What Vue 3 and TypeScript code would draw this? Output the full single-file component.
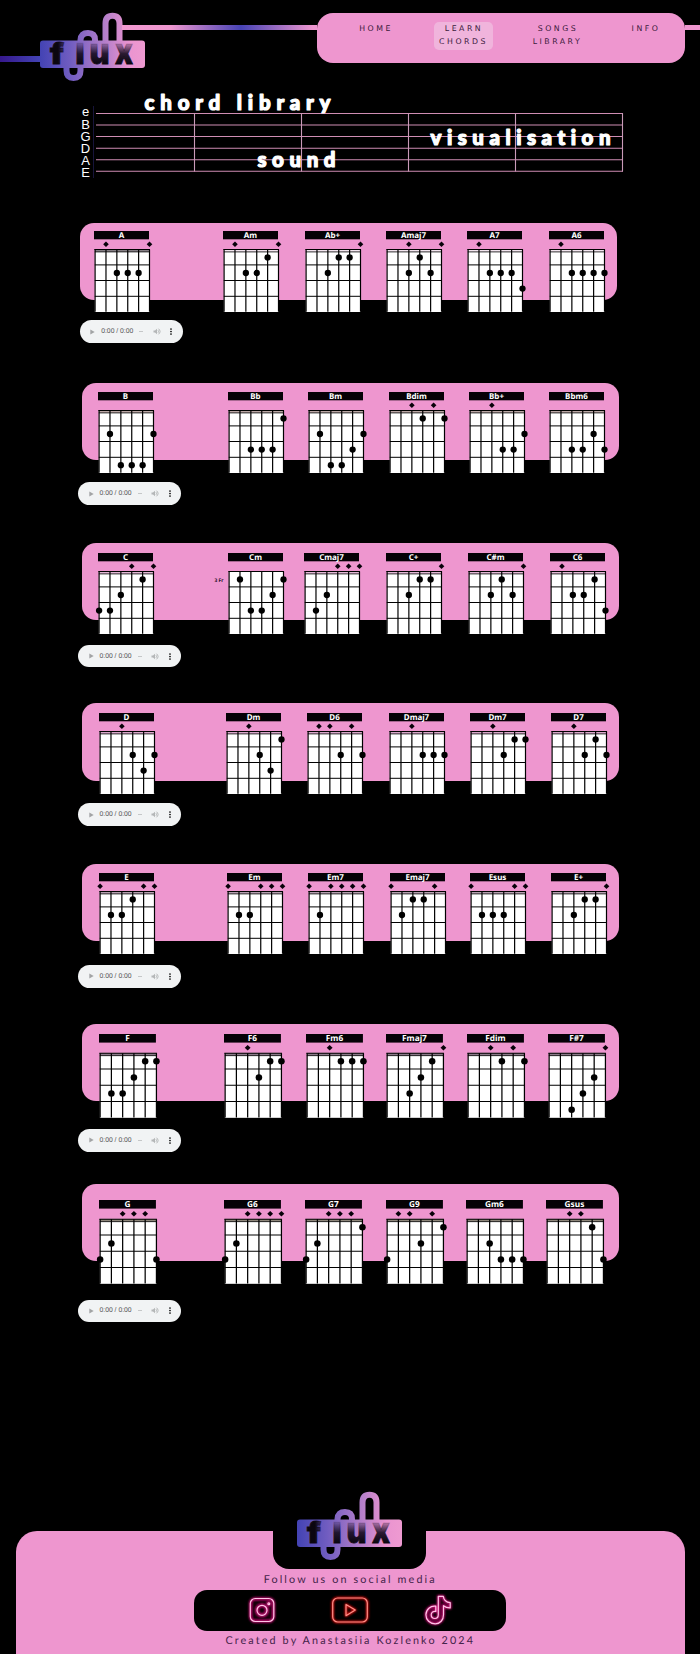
<script setup lang="ts">
interface Chord {
  name: string
  open: number[]
  dots: [number, number][]
  fret?: string
}

interface Family {
  id: string
  scale: number
  left: number
  top: number
  xs: number[]
  nut: string
  audioLeft: number
  audioGap: number
  chords: Chord[]
}

const c = (name: string, open: number[], dots: [number, number][], fret?: string): Chord => ({ name, open, dots, fret })

const families: Family[] = [
  {
    id: 'A', scale: 1, left: 80.2, top: 8.2, xs: [94, 223.3, 305, 386, 467.3, 548.7], nut: '#f4e6f0', audioLeft: 79.7, audioGap: 20.3,
    chords: [
      c('A', [1, 5], [[2, 2], [3, 2], [4, 2]]),
      c('Am', [1, 5], [[4, 1], [2, 2], [3, 2]]),
      c('Ab+', [5], [[3, 1], [4, 1], [2, 2]]),
      c('Amaj7', [2, 5], [[3, 1], [2, 2], [4, 2]]),
      c('A7', [1], [[2, 2], [3, 2], [4, 2], [5, 3]]),
      c('A6', [1], [[2, 2], [3, 2], [4, 2], [5, 2]]),
    ],
  },
  {
    id: 'B', scale: 1, left: 82.4, top: 9.1, xs: [98.3, 228, 308.3, 389, 469, 549.3], nut: '#b9a6a4', audioLeft: 78, audioGap: 22,
    chords: [
      c('B', [], [[1, 2], [5, 2], [2, 4], [3, 4], [4, 4]]),
      c('Bb', [], [[5, 1], [2, 3], [3, 3], [4, 3]]),
      c('Bm', [], [[1, 2], [5, 2], [4, 3], [2, 4], [3, 4]]),
      c('Bdim', [2, 4], [[3, 1], [5, 1]]),
      c('Bb+', [2], [[5, 2], [3, 3], [4, 3]]),
      c('Bbm6', [], [[4, 2], [2, 3], [3, 3], [5, 3]]),
    ],
  },
  {
    id: 'C', scale: 1, left: 82.4, top: 9.7, xs: [97.9, 228.2, 303.9, 386.4, 468.2, 550.4], nut: '#e3b9d6', audioLeft: 78, audioGap: 24.2,
    chords: [
      c('C', [3, 5], [[4, 1], [2, 2], [0, 3], [1, 3]]),
      c('Cm', [], [[1, 1], [5, 1], [4, 2], [2, 3], [3, 3]], '3 Fr'),
      c('Cmaj7', [3, 4, 5], [[2, 2], [1, 3]]),
      c('C+', [5], [[3, 1], [4, 1], [2, 2]]),
      c('C#m', [5], [[3, 1], [2, 2], [4, 2]]),
      c('C6', [1], [[4, 1], [2, 2], [3, 2], [5, 3]]),
    ],
  },
  {
    id: 'D', scale: 1, left: 82.4, top: 9.6, xs: [99.3, 226.4, 307.5, 388.6, 470, 551], nut: '#d9a8cb', audioLeft: 78, audioGap: 22.7,
    chords: [
      c('D', [2], [[3, 2], [5, 2], [4, 3]]),
      c('Dm', [2], [[5, 1], [3, 2], [4, 3]]),
      c('D6', [1, 2, 4], [[3, 2], [5, 2]]),
      c('Dmaj7', [2], [[3, 2], [4, 2], [5, 2]]),
      c('Dm7', [2], [[4, 1], [5, 1], [3, 2]]),
      c('D7', [2], [[4, 1], [3, 2], [5, 2]]),
    ],
  },
  {
    id: 'E', scale: 1, left: 82.4, top: 9.5, xs: [99.3, 227.5, 308.2, 390.4, 470, 551], nut: '#b5a0b0', audioLeft: 78, audioGap: 24,
    chords: [
      c('E', [0, 4, 5], [[3, 1], [1, 2], [2, 2]]),
      c('Em', [0, 3, 4, 5], [[1, 2], [2, 2]]),
      c('Em7', [0, 2, 3, 4, 5], [[1, 2]]),
      c('Emaj7', [0, 4], [[2, 1], [3, 1], [1, 2]]),
      c('Esus', [0, 4, 5], [[1, 2], [2, 2], [3, 2]]),
      c('E+', [5], [[3, 1], [4, 1], [2, 2]]),
    ],
  },
  {
    id: 'F', scale: 1.035, left: 82.4, top: 10.2, xs: [98.6, 224.3, 305.7, 386.4, 467.1, 548.2], nut: '#8a7a88', audioLeft: 78, audioGap: 28,
    chords: [
      c('F', [], [[4, 1], [5, 1], [3, 2], [1, 3], [2, 3]]),
      c('F6', [2], [[4, 1], [5, 1], [3, 2]]),
      c('Fm6', [2], [[3, 1], [4, 1], [5, 1]]),
      c('Fmaj7', [5], [[4, 1], [3, 2], [2, 3]]),
      c('Fdim', [2, 4], [[3, 1], [5, 1]]),
      c('F#7', [5], [[4, 2], [3, 3], [2, 4]]),
    ],
  },
  {
    id: 'G', scale: 1.035, left: 82.4, top: 15.7, xs: [98.9, 224.3, 304.6, 385.7, 465.7, 546.4], nut: '#8d8579', audioLeft: 78, audioGap: 38.5,
    chords: [
      c('G', [2, 3, 4], [[1, 2], [0, 3], [5, 3]]),
      c('G6', [2, 3, 4, 5], [[1, 2], [0, 3]]),
      c('G7', [2, 3, 4], [[5, 1], [1, 2], [0, 3]]),
      c('G9', [1, 2, 4], [[5, 1], [3, 2], [0, 3]]),
      c('Gm6', [], [[2, 2], [3, 3], [4, 3], [5, 3]]),
      c('Gsus', [2, 3], [[4, 1], [5, 3]]),
    ],
  },
]

const stringX = (n: number): number => 1.1 + n * 10.88
const fretY = (n: number): number => 10.8 + n * 15.6

const panelStyle = (f: Family) => ({
  marginLeft: `${f.left}px`,
  padding: `${f.top}px 0 0 ${f.xs[0] - f.left}px`,
  gridTemplateColumns: f.xs.map((x, i) => (i < 5 ? `${(f.xs[i + 1] - x).toFixed(1)}px` : 'auto')).join(' '),
})

const board = [113.5, 125, 136.5, 148.2, 159.7, 171.3]
const bars = [194.5, 301.5, 408.5, 515.5, 622.5]
const tuning = [
  { n: 'e', y: 115.5 }, { n: 'B', y: 129 }, { n: 'G', y: 141 },
  { n: 'D', y: 153 }, { n: 'A', y: 165 }, { n: 'E', y: 177 },
]
const words = [
  { t: 'chord library', x: 144.5, y: 110.3, w: 186 },
  { t: 'visualisation', x: 430.5, y: 145.3, w: 180 },
  { t: 'sound', x: 257.5, y: 167, w: 78 },
]
</script>

<template>
  <div class="page">
    <svg class="defs" width="0" height="0" aria-hidden="true">
      <defs>
        <linearGradient id="brand" gradientUnits="userSpaceOnUse" x1="0" y1="0" x2="105" y2="0">
          <stop offset="0" stop-color="#4343b4" />
          <stop offset=".28" stop-color="#6f5cc0" />
          <stop offset=".62" stop-color="#b57fca" />
          <stop offset=".85" stop-color="#ea94d0" />
          <stop offset="1" stop-color="#ee9ad1" />
        </linearGradient>
        <linearGradient id="ink" gradientUnits="userSpaceOnUse" x1="0" y1="29" x2="0" y2="52">
          <stop offset="0" stop-color="#120a1c" stop-opacity="0" />
          <stop offset=".55" stop-color="#120a1c" stop-opacity=".88" />
          <stop offset="1" stop-color="#0b0610" />
        </linearGradient>
        <linearGradient id="inkSide" gradientUnits="userSpaceOnUse" x1="11" y1="0" x2="25" y2="0">
          <stop offset="0" stop-color="#0b0610" />
          <stop offset=".5" stop-color="#0b0610" />
          <stop offset="1" stop-color="#120a1c" stop-opacity=".45" />
        </linearGradient>
        <symbol id="logo" viewBox="0 0 106 70">
          <rect x="0" y="28.500" width="105" height="27.500" rx="3" fill="url(#brand)" />
          <path d="M26.500 36V58.500Q26.500 66 33.500 66T40.500 58.500V28Q41 21 48 21T55 28V36M65.500 34V11.500Q65.500 3.700 72.500 3.700T79.500 11.500V36" fill="none" stroke="url(#brand)" stroke-width="6" />
          <g class="letters">
            <text class="tall side" x="10" y="52" textLength="14" lengthAdjust="spacingAndGlyphs">f</text>
            <text class="tall" x="35.500" y="52" textLength="9" lengthAdjust="spacingAndGlyphs">l</text>
            <text class="wide" x="49.500" y="52" textLength="20" lengthAdjust="spacingAndGlyphs">u</text>
            <text class="wide" x="75" y="52" textLength="18" lengthAdjust="spacingAndGlyphs">x</text>
          </g>
        </symbol>
        <filter id="glow" x="-30%" y="-30%" width="160%" height="160%"><feGaussianBlur stdDeviation="1.1" /></filter>
      </defs>
    </svg>

    <header class="head">
      <i class="wire wire-in"></i>
      <svg class="logo" width="106" height="70"><use href="#logo" /></svg>
      <i class="wire wire-mid"></i>
      <nav class="nav">
        <a class="home">HOME</a>
        <a class="active">LEARN<br>CHORDS</a>
        <a class="songs">SONGS<br>LIBRARY</a>
        <a class="info">INFO</a>
      </nav>
      <i class="wire wire-out"></i>
    </header>

    <svg class="board" width="700" height="143" viewBox="0 80 700 143">
      <path d="M93.500 106V178" stroke="#17143a" />
      <path v-for="y in board" :key="y" :d="`M96 ${y}H623`" stroke="#cf8db3" stroke-width="1.1" />
      <path v-for="x in bars" :key="x" :d="`M${x} 113V171.500`" stroke="#c99ab8" stroke-width="1.1" />
      <text v-for="s in tuning" :key="s.n + s.y" class="tuning" x="85.500" :y="s.y">{{ s.n }}</text>
      <text v-for="w in words" :key="w.t" class="word" :x="w.x" :y="w.y" :textLength="w.w">{{ w.t }}</text>
    </svg>

    <main>
      <section v-for="f in families" :key="f.id" class="family">
        <div class="panel" :style="panelStyle(f)">
          <svg
            v-for="ch in f.chords" :key="ch.name" class="chord"
            :width="57 * f.scale" :height="83 * f.scale" viewBox="0 0 57 83"
          >
            <rect width="55" height="8.300" fill="#050106" />
            <text class="name" x="27.500" y="7">{{ ch.name }}</text>
            <text v-if="ch.fret" class="pos" x="-4.500" y="29.300">{{ ch.fret }}</text>
            <rect x=".8" y="18.300" width="54.800" height="62.700" fill="#fff" />
            <rect v-if="!ch.fret" x="1" y="18.300" width="54.500" height="2.600" :fill="f.id === 'A' && ch.name === 'A' ? '#857e84' : f.nut" />
            <path d="M.3 18.500H56" stroke="#000" stroke-width="1" />
            <path v-if="!ch.fret" d="M.8 20.900H55.700" stroke="#000" stroke-width=".8" />
            <path d="M.8 33.900H55.700M.8 49.500H55.700M.8 65.300H55.700" stroke="#000" stroke-width="1" />
            <path v-for="n in 6" :key="n" :d="`M${stringX(n - 1)} 18.500V80.700`" stroke="#000" stroke-width="1.200" />
            <path
              v-for="o in ch.open" :key="'o' + o"
              :d="`M${stringX(o)} 10.600l2.800 2.700-2.800 2.700-2.800-2.700z`" fill="#08020a"
            />
            <circle v-for="(d, i) in ch.dots" :key="'d' + i" :cx="stringX(d[0])" :cy="fretY(d[1])" r="3.150" />
          </svg>
        </div>
        <div class="audio" :style="{ marginLeft: f.audioLeft + 'px', marginTop: f.audioGap + 'px' }">
          <svg class="play" width="5" height="6" viewBox="0 0 5 6"><path d="M.3.500 4.700 3 .3 5.500z" fill="#a2a4a5" /></svg>
          <span class="time">0:00 / 0:00</span>
          <i class="track"></i>
          <svg class="vol" width="8" height="7" viewBox="0 0 8 7">
            <path d="M.5 2.400H2L4 .7V6.300L2 4.600H.5z" fill="#b4b6b7" />
            <path d="M5 2.200Q6 3.500 5 4.800M5.500.7Q8.600 3.500 5.500 6.300" fill="none" stroke="#a7a9aa" stroke-width=".8" />
          </svg>
          <svg class="more" width="2" height="7" viewBox="0 0 2 7">
            <circle cx="1" cy="1" r=".85" /><circle cx="1" cy="3.500" r=".85" /><circle cx="1" cy="6" r=".85" />
          </svg>
        </div>
      </section>
    </main>

    <footer class="foot">
      <div class="notch"><svg class="logo" width="106" height="70"><use href="#logo" /></svg></div>
      <p class="follow">Follow us on social media</p>
      <div class="social">
        <svg width="40" height="36" viewBox="0 0 40 36">
          <g v-for="k in 2" :key="k" :class="['neon', k === 1 ? 'halo pink' : 'tube']">
            <rect x="8.300" y="6.500" width="23.500" height="23" rx="5" />
            <circle cx="20" cy="18.300" r="5" />
            <circle cx="26.800" cy="11.700" r=".9" />
          </g>
        </svg>
        <svg width="46" height="36" viewBox="0 0 46 36">
          <g v-for="k in 2" :key="k" :class="['neon', k === 1 ? 'halo red' : 'tube warm']">
            <rect x="5.700" y="6" width="34.600" height="24" rx="5" />
            <path d="M19 12.500V23.700L28.300 18.100z" />
          </g>
        </svg>
        <svg width="40" height="36" viewBox="0 0 40 36">
          <g v-for="k in 2" :key="k" :class="['neon', k === 1 ? 'halo pink' : 'tube']">
            <path d="M20.300 4.300H25.300C25.800 8 28.600 10.300 32.200 10.600V15.900C29.500 16 27.200 15.100 25.500 13.700V22.700C25.500 28 22.100 31.800 17.200 31.800C12 31.800 7.900 28 7.900 22.800C7.900 17.400 12.500 13.400 17.800 14.200V19.500C15.300 18.800 13.200 20.300 13.200 22.800C13.200 25 14.900 26.500 16.900 26.500C19.200 26.500 20.300 24.900 20.300 22.500Z" />
          </g>
        </svg>
      </div>
      <p class="credit">Created by Anastasiia Kozlenko 2024</p>
    </footer>
  </div>
</template>

<style>
body { margin: 0; background: #000; }
</style>

<style scoped>
.page { width: 700px; height: 1654px; overflow: hidden; background: #000; position: relative; display: flex; flex-direction: column; }
.defs { position: absolute; }
.head { display: flex; align-items: flex-start; height: 80px; padding-top: 12px; box-sizing: border-box; flex: none; }
.wire { display: block; height: 5.500px; flex: none; }
.wire-in { width: 40px; margin-top: 44px; background: linear-gradient(90deg, #36188c, #4343b4); }
.logo { display: block; flex: none; overflow: visible; }
.wire-mid { width: 195px; margin: 12.500px 0 0 -24px; background: linear-gradient(90deg, #f39ad2, #ee96cf 25%, #4743b5 61%, #ee96cf 98%); }
.wire-out { width: 15px; margin-top: 12.500px; background: #ee96cf; }
.letters text { font: 900 28px Inter, sans-serif; fill: url(#ink); stroke: url(#ink); stroke-width: .8px; }
.letters .side { fill: url(#inkSide); stroke: url(#inkSide); }
.letters .wide { font-size: 36px; }
.nav { width: 368px; height: 50.500px; margin-top: .7px; box-sizing: border-box; border-radius: 16px; background: #ee96cf; display: flex; align-items: flex-start; padding-top: 9px; flex: none; }
.nav a { font: 400 7.800px/13px "DejaVu Sans", sans-serif; letter-spacing: 2.500px; color: #3b1a3c; text-align: center; text-indent: 1px; width: 59px; height: 28px; flex: none; border-radius: 5px; padding-top: .7px; box-sizing: border-box; }
.nav .home { margin-left: 29px; }
.nav .active { margin-left: 29px; background: #f0b4dc; }
.nav .songs { margin-left: 35px; }
.nav .info { margin-left: 29px; }
.board { display: block; flex: none; }
.tuning { font: 13px "Liberation Sans", Arial, sans-serif; fill: #fff; text-anchor: middle; }
.word { font: 900 20.500px Lato, sans-serif; font-variant-ligatures: none; fill: #fff; stroke: #fff; stroke-width: 1.200px; stroke-linejoin: round; }
.family { height: 160.150px; }
.panel { width: 536.600px; height: 77.200px; box-sizing: border-box; border-radius: 14px; background: #ee96cf; display: grid; align-items: start; }
.chord { display: block; overflow: visible; }
.name { font: 700 8px "Noto Sans", sans-serif; fill: #fff; text-anchor: middle; text-rendering: geometricPrecision; }
.pos { font: 700 4.900px "Noto Sans", sans-serif; fill: #1c0a1c; text-anchor: end; text-rendering: geometricPrecision; }
.audio { width: 103.400px; height: 22.800px; border-radius: 12px; background: #f1f3f4; display: flex; align-items: center; box-sizing: border-box; padding-left: 10.500px; }
.time { font: 6.800px "Liberation Sans", sans-serif; color: #555; margin-left: 6px; width: 32px; white-space: nowrap; text-rendering: geometricPrecision; }
.track { width: 4px; height: 1px; background: #c5c7c8; margin-left: 6px; }
.vol { margin-left: 9.500px; }
.more { margin-left: 9.500px; }
.foot { position: absolute; left: 16px; top: 1531px; width: 668.500px; height: 123px; border-radius: 21px 21px 0 0; background: #ee96cf; display: flex; flex-direction: column; align-items: center; }
.notch { width: 153px; height: 37.500px; margin-left: -1px; background: #000; border-radius: 0 0 16px 16px; flex: none; }
.notch .logo { margin: -40px 0 0 23.500px; }
.foot p { margin: 0; font: 10.800px/14px Lato, sans-serif; letter-spacing: 2.120px; color: #45234a; white-space: nowrap; text-rendering: geometricPrecision; }
.foot .follow { margin-top: 4px; }
.social { width: 312px; height: 41px; margin-top: 3px; border-radius: 13px; background: #000; display: flex; align-items: center; justify-content: space-between; padding: 0 48px; box-sizing: border-box; }
.foot .credit { margin-top: 3.500px; }
.neon { fill: none; stroke-linejoin: round; }
.halo { stroke-width: 2.600; filter: url(#glow); opacity: .85; }
.pink { stroke: #f0158c; fill: #1c0211; }
.red { stroke: #ff1212; }
.tube { stroke: #ffc4e6; stroke-width: 1.200; }
.warm { stroke: #ff8f88; }
</style>
